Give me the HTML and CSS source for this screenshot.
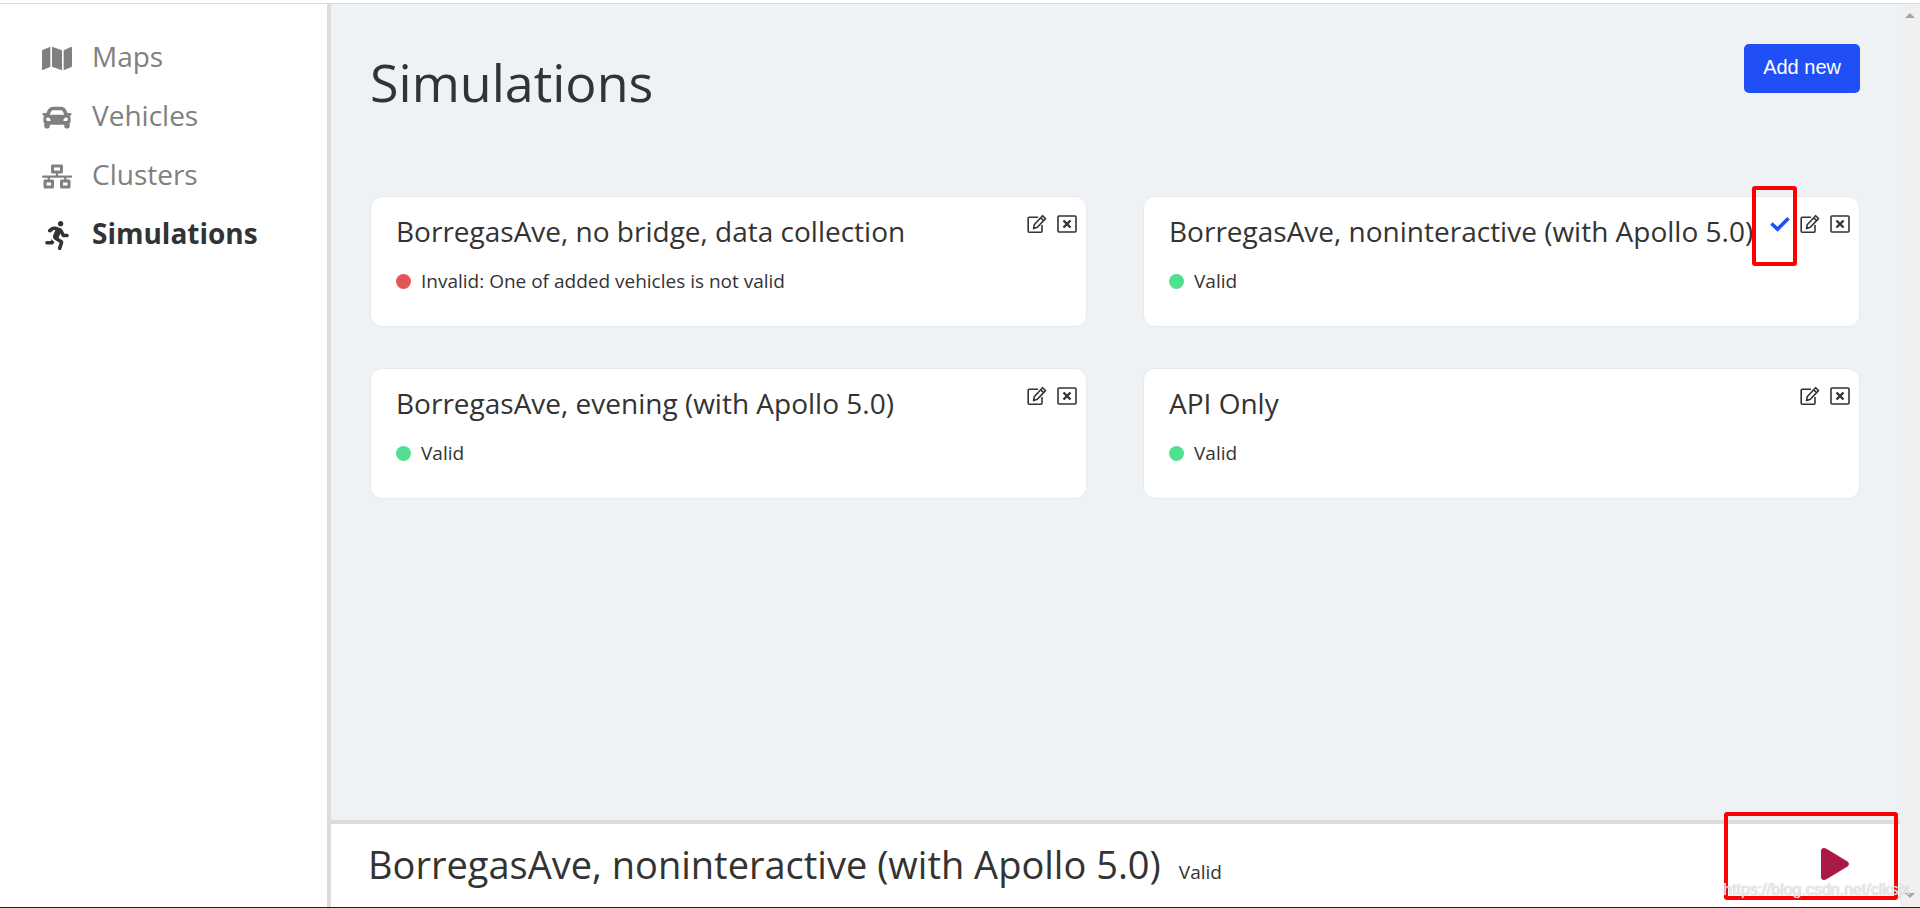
FILE: index.html
```html
<!DOCTYPE html>
<html lang="en">
<head>
<meta charset="utf-8">
<title>Simulations</title>
<link rel="stylesheet" href="styles.css">
</head>
<body>
<svg class="defs" aria-hidden="true">
  <symbol id="edit" viewBox="0 0 20 20"><g fill="none" stroke="currentColor" stroke-width="1.6" stroke-linejoin="round" stroke-linecap="round"><path d="M10.500 3.300H2.200a1 1 0 0 0-1 1V17.300a1 1 0 0 0 1 1H14a1 1 0 0 0 1-1V11.500"/><path d="M15.600 1.700 18.500 4.600 10.300 13.200 6.600 14.600 7.200 10.700ZM13.700 3.800 16.500 6.600"/></g></symbol>
  <symbol id="close" viewBox="0 0 20 20"><g fill="none" stroke="currentColor"><rect x="1" y="2" width="18" height="16" rx="1" stroke-width="1.600"/><path d="M6.500 6.500 13.500 13.500M13.500 6.500 6.500 13.500" stroke-width="2.400"/></g></symbol>
</svg>
<div class="app">
  <nav class="sidebar">
    <a class="nav-link" href="#maps"><svg class="nav-icon" viewBox="0 0 576 512"><path d="M0 117.660v346.320c0 11.320 11.430 19.060 21.940 14.860L160 416V32L20.120 87.950A32 32 0 0 0 0 117.660zM192 416l192 64V96L192 32v384zM554.060 33.160L416 96v384l139.880-55.950A32 32 0 0 0 576 394.340V48.020c0-11.320-11.430-19.060-21.940-14.860z"/></svg>Maps</a>
    <a class="nav-link" href="#vehicles"><svg class="nav-icon" viewBox="0 0 512 512"><path d="M499.990 176h-59.870l-16.640-41.600C406.380 91.630 365.570 64 319.500 64h-127c-46.060 0-86.880 27.630-103.990 70.400L71.870 176H12.010C4.200 176-1.530 183.340.370 190.910l6 24C7.700 220.250 12.500 224 18.010 224h20.070C24.650 235.730 16 252.780 16 272v48c0 16.120 6.160 30.670 16 41.930V416c0 17.670 14.330 32 32 32h32c17.670 0 32-14.330 32-32v-32h256v32c0 17.670 14.330 32 32 32h32c17.670 0 32-14.330 32-32v-54.070c9.840-11.250 16-25.800 16-41.930v-48c0-19.220-8.650-36.270-22.070-48H494c5.510 0 10.310-3.750 11.640-9.090l6-24c1.890-7.570-3.840-14.910-11.650-14.910zm-352.060-17.830c7.290-18.220 24.940-30.170 44.570-30.170h127c19.630 0 37.280 11.950 44.570 30.170L384 208H128l19.930-49.830zM96 319.800c-19.200 0-32-12.760-32-31.900S76.800 256 96 256s48 28.710 48 47.850-28.800 15.950-48 15.950zm320 0c-19.200 0-48 3.190-48-15.950S396.800 256 416 256s32 12.760 32 31.900-12.800 31.900-32 31.900z"/></svg>Vehicles</a>
    <a class="nav-link" href="#clusters"><svg class="nav-icon" viewBox="0 0 640 512"><path d="M640 264v-16c0-8.840-7.160-16-16-16H344v-40h72c17.670 0 32-14.330 32-32V32c0-17.670-14.330-32-32-32H224c-17.670 0-32 14.330-32 32v128c0 17.670 14.330 32 32 32h72v40H16c-8.840 0-16 7.160-16 16v16c0 8.840 7.160 16 16 16h104v40H64c-17.670 0-32 14.330-32 32v128c0 17.670 14.330 32 32 32h160c17.670 0 32-14.330 32-32V352c0-17.670-14.330-32-32-32h-56v-40h304v40h-56c-17.670 0-32 14.330-32 32v128c0 17.670 14.330 32 32 32h160c17.670 0 32-14.330 32-32V352c0-17.670-14.330-32-32-32h-56v-40h104c8.840 0 16-7.160 16-16zM256 128V64h128v64H256zm-64 320H96v-64h96v64zm352 0h-96v-64h96v64z"/></svg>Clusters</a>
    <a class="nav-link active" href="#simulations" aria-current="page"><svg class="nav-icon" viewBox="0 0 416 512"><path d="M272 96c26.510 0 48-21.490 48-48S298.510 0 272 0s-48 21.490-48 48 21.490 48 48 48zM113.690 317.470l-14.800 34.520H32c-17.670 0-32 14.330-32 32s14.330 32 32 32h77.450c19.250 0 36.580-11.440 44.110-29.090l8.790-20.520-10.670-6.300c-17.320-10.230-30.060-25.370-37.990-42.820zM384 223.990h-44.030l-26.060-53.250c-12.500-25.550-35.450-44.230-61.780-50.940l-71.080-21.140c-28.300-6.800-57.770-.550-80.840 17.140l-39.670 30.410c-14.030 10.750-16.690 30.830-5.920 44.860s30.840 16.660 44.860 5.920l39.690-30.410c7.670-5.890 17.440-8 25.270-6.140l14.700 4.370-37.460 87.390c-12.620 29.480-1.310 64.010 26.300 80.310l84.980 50.170-27.470 87.730c-5.280 16.860 4.110 34.820 20.970 40.090 3.190 1 6.410 1.480 9.580 1.480 13.610 0 26.230-8.770 30.520-22.450l31.640-101.060c5.910-20.770-2.890-43.080-21.640-54.390l-61.240-36.140 31.310-78.280 20.270 41.430c8 16.340 24.920 26.890 43.110 26.890H384c17.670 0 32-14.330 32-32s-14.330-31.990-32-31.990z"/></svg>Simulations</a>
  </nav>
  <div class="content">
    <main class="main">
      <header class="page-header">
        <h1 class="page-title">Simulations</h1>
        <button class="add-button" type="button">Add new</button>
      </header>
      <section class="cards">
        <article class="card">
          <div class="card-body"><h2 class="card-title">BorregasAve, no bridge, data collection</h2>
          <p class="status"><span class="dot invalid"></span>Invalid: One of added vehicles is not valid</p></div>
          <div class="actions"><button class="icon-button" type="button" aria-label="Edit"><svg><use href="#edit"/></svg></button><button class="icon-button" type="button" aria-label="Delete"><svg><use href="#close"/></svg></button></div>
        </article>
        <article class="card">
          <div class="card-body"><h2 class="card-title">BorregasAve, noninteractive (with Apollo 5.0)</h2>
          <p class="status"><span class="dot"></span>Valid</p></div>
          <div class="actions"><span class="selected"><svg viewBox="0 0 20 20"><path d="M1.500 9.500 7.500 15.200 18.500 4.200" fill="none" stroke="currentColor" stroke-width="3.600"/></svg><span class="mark mark-check"></span></span><button class="icon-button" type="button" aria-label="Edit"><svg><use href="#edit"/></svg></button><button class="icon-button" type="button" aria-label="Delete"><svg><use href="#close"/></svg></button></div>
        </article>
        <article class="card">
          <div class="card-body"><h2 class="card-title">BorregasAve, evening (with Apollo 5.0)</h2>
          <p class="status"><span class="dot"></span>Valid</p></div>
          <div class="actions"><button class="icon-button" type="button" aria-label="Edit"><svg><use href="#edit"/></svg></button><button class="icon-button" type="button" aria-label="Delete"><svg><use href="#close"/></svg></button></div>
        </article>
        <article class="card">
          <div class="card-body"><h2 class="card-title">API Only</h2>
          <p class="status"><span class="dot"></span>Valid</p></div>
          <div class="actions"><button class="icon-button" type="button" aria-label="Edit"><svg><use href="#edit"/></svg></button><button class="icon-button" type="button" aria-label="Delete"><svg><use href="#close"/></svg></button></div>
        </article>
      </section>
    </main>
    <footer class="player">
      <span class="player-title">BorregasAve, noninteractive (with Apollo 5.0)</span>
      <span class="player-status">Valid</span>
      <button class="play-button" type="button" aria-label="Play"><svg viewBox="0 0 28 32"><path d="M0 3Q0 0 3 0L5 .600 26.500 13.500Q29.500 16 26.500 18.500L5 31.400 3 32Q0 32 0 29Z" fill="currentColor"/></svg></button>
      <span class="mark mark-play"></span>
      <span class="watermark">https://blog.csdn.net/clksjx</span>
    </footer>
  </div>
  <div class="scrollbar" aria-hidden="true"><svg viewBox="0 0 10 5"><path d="M0 5 5 0 10 5Z"/></svg><svg viewBox="0 0 10 5"><path d="M0 0 5 5 10 0Z"/></svg></div>
</div>
</body>
</html>
```
FILE: styles.css
```css
* { box-sizing: border-box; }
body {
  margin: 0;
  color: #333;
  font-family: "Segoe UI", "Open Sans", "Noto Sans", sans-serif;
}
button { margin: 0; border: 0; padding: 0; background: none; color: inherit; }
svg { display: block; }
.defs { display: none; }
.app {
  display: flex;
  min-height: 100vh;
  padding-top: 3px;
  border-bottom: 1px solid #22221c;
}
.sidebar {
  display: flex;
  flex-direction: column;
  flex: none;
  width: 331px;
  padding: 22px 0 0 42px;
  border-top: 1px solid #dadada;
  border-right: 4px solid #dcdcdc;
}
.nav-link {
  display: flex;
  align-items: center;
  gap: 20px;
  height: 59px;
  color: #808080;
  font-size: 28px;
  text-decoration: none;
}
.nav-icon { width: 30px; height: 29px; margin-top: 6px; fill: currentColor; }
.active { color: #333; font-weight: 700; }
.content {
  display: flex;
  flex: 1;
  flex-direction: column;
  min-width: 0;
}
.main {
  flex: 1;
  padding: 40px 40px 40px 39px;
  border-top: 1px solid #d5d8dc;
  background: #eef2f5;
}
.page-header {
  display: flex;
  align-items: flex-start;
  justify-content: space-between;
  margin-bottom: 76px;
}
.page-title { margin: 0; font-size: 52px; font-weight: 400; line-height: 76px; }
.add-button {
  padding: 0 19px 2px;
  border-radius: 5px;
  background: #2050f5;
  color: #fff;
  font: 20px/47px "Liberation Sans", Arial, sans-serif;
}
.cards {
  display: grid;
  grid-template-columns: 1fr 1fr;
  gap: 41px 56px;
}
.card {
  display: flex;
  align-items: flex-start;
  min-width: 0;
  min-height: 131px;
  padding: 14px 9px 14px 25px;
  border: 1px solid #e6eaee;
  border-radius: 12px;
  background: #fff;
}
.card-body { flex: 1; min-width: 0; }
.card-title {
  margin: 0;
  overflow: hidden;
  font-size: 28px;
  font-weight: 400;
  line-height: 40px;
  white-space: nowrap;
}
.status {
  display: flex;
  align-items: center;
  gap: 10px;
  margin: 16px 0 0;
  font-size: 19px;
  line-height: 28px;
}
.dot { width: 15px; height: 15px; border-radius: 50%; background: #50e090; }
.invalid { background: #e65555; }
.actions { display: flex; gap: 10px; padding-top: 3px; }
.icon-button svg, .selected svg { width: 20px; height: 20px; }
.selected { position: relative; color: #2050f5; }
.mark { position: absolute; border: 4px solid #f00; border-radius: 3px; }
.mark-check { top: -28px; left: -18px; width: 45px; height: 80px; }
.player {
  position: relative;
  display: flex;
  align-items: baseline;
  gap: 18px;
  padding: 12px 51px 15px 37px;
  border-top: 4px solid #dcdcdc;
  background: #fff;
}
.player-title { font-size: 38px; line-height: 56px; white-space: nowrap; }
.player-status { font-size: 19px; }
.play-button { align-self: center; margin-left: auto; color: #ab1a46; }
.play-button svg { width: 28px; height: 32px; }
.mark-play { top: -12px; right: 2px; width: 174px; height: 88px; }
.watermark {
  position: absolute;
  right: -10px;
  bottom: 7px;
  z-index: 1;
  color: rgba(255, 255, 255, 0.8);
  font: 16px/20px "Liberation Sans", Arial, sans-serif;
  text-shadow: 0 0 1px #999;
}
.scrollbar {
  display: flex;
  flex: none;
  flex-direction: column;
  align-items: center;
  justify-content: space-between;
  width: 20px;
  padding: 9px 0;
  border-top: 1px solid #dadada;
  background: #f0f0f0;
}
.scrollbar svg { width: 10px; height: 5px; fill: #a3a3a3; }
```
